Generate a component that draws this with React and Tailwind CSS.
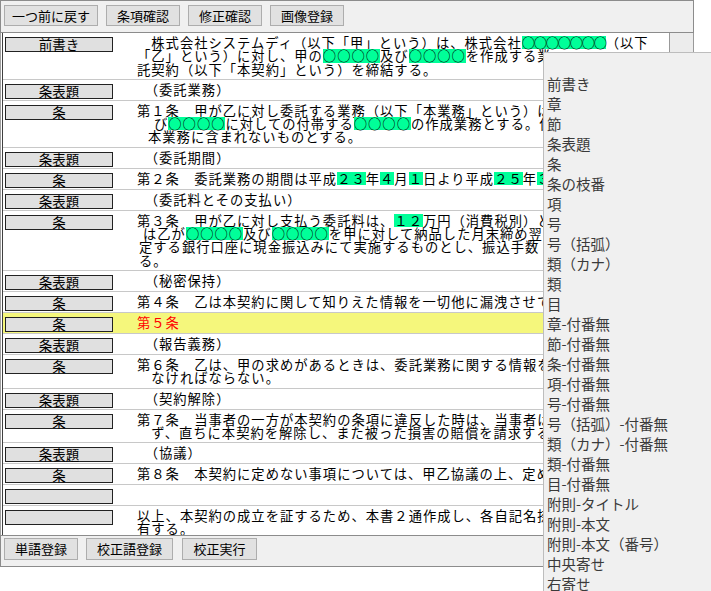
import React from "react";

const Hl = ({ children, tight }) => (
  <span
    className={
      tight
        ? "inline-block bg-[#00ff99] tracking-[-1.3px]"
        : "inline-block bg-[#00ff99]"
    }
  >
    {children}
  </span>
);

const Row = ({ label, yellow, children }) => (
  <div
    className={
      yellow
        ? "flex min-h-[21px] border-b border-[#c8c8c8] bg-[#f5f77c]"
        : "flex min-h-[21px] border-b border-[#c8c8c8]"
    }
  >
    <div className="shrink-0 pl-[2px] pt-[4px]">
      <div className="w-[108px] h-[15px] border border-[#222] bg-[#e0e0e0] text-center text-[13.5px] leading-[13px] text-black">
        {label}
      </div>
    </div>
    <div className="ml-[24px] pt-[3px] pb-[3px] text-[13.3px] tracking-[1px] leading-[13.3px] text-black whitespace-nowrap">
      {children}
    </div>
  </div>
);

const Btn = ({ children, w, h }) => (
  <div
    className={
      "flex items-center justify-center border border-[#adadad] bg-[#e1e1e1] text-[13px] text-black " +
      w +
      " " +
      h
    }
  >
    {children}
  </div>
);

const menuItems = [
  "",
  "前書き",
  "章",
  "節",
  "条表題",
  "条",
  "条の枝番",
  "項",
  "号",
  "号（括弧）",
  "類（カナ）",
  "類",
  "目",
  "章-付番無",
  "節-付番無",
  "条-付番無",
  "項-付番無",
  "号-付番無",
  "号（括弧）-付番無",
  "類（カナ）-付番無",
  "類-付番無",
  "目-付番無",
  "附則-タイトル",
  "附則-本文",
  "附則-本文（番号）",
  "中央寄せ",
  "右寄せ",
];

export default function App() {
  return (
    <div className="relative w-[711px] h-[591px] overflow-hidden bg-white font-['Noto_Sans_CJK_JP',sans-serif]">
      <div className="w-[694px] flex flex-col">
        {/* top toolbar */}
        <div className="h-[33px] border border-[#8c8c8c] bg-[#f0f0f0] flex items-start gap-[8px] pl-[3px] pt-[4px]">
          <Btn w="w-[94px]" h="h-[21px]">一つ前に戻す</Btn>
          <Btn w="w-[74px]" h="h-[21px]">条項確認</Btn>
          <Btn w="w-[74px]" h="h-[21px]">修正確認</Btn>
          <Btn w="w-[74px]" h="h-[21px]">画像登録</Btn>
        </div>

        {/* table + scrollbar */}
        <div className="h-[502px] flex border-l border-[#a0a0a0] pl-[1px]">
          <div className="flex-1 min-w-0 border-l border-[#404040] overflow-hidden">
            <Row label="前書き">
              <div>
                {"　株式会社システムディ（以下「甲」という）は、株式会社"}
                <Hl tight>○○○○○○○</Hl>（以下
              </div>
              <div>
                「乙」という）に対し、甲の<Hl>○○○○</Hl>及び<Hl>○○○○</Hl>
                を作成する業
              </div>
              <div>託契約（以下「本契約」という）を締結する。</div>
            </Row>
            <Row label="条表題">
              <div>{"　（委託業務）"}</div>
            </Row>
            <Row label="条">
              <div>第１条　甲が乙に対し委託する業務（以下「本業務」という）は</div>
              <div className="pl-[17px]">
                び<Hl>○○○○</Hl>に対しての付帯する<Hl>○○○○</Hl>の作成業務とする。但
              </div>
              <div className="pl-[11px]">本業務に含まれないものとする。</div>
            </Row>
            <Row label="条表題">
              <div>{"　（委託期間）"}</div>
            </Row>
            <Row label="条">
              <div>
                第２条　委託業務の期間は平成<Hl>２３</Hl>年<Hl>４</Hl>月<Hl>１</Hl>
                日より平成<Hl>２５</Hl>年<Hl>３</Hl>
              </div>
            </Row>
            <Row label="条表題">
              <div>{"　（委託料とその支払い）"}</div>
            </Row>
            <Row label="条">
              <div>
                第３条　甲が乙に対し支払う委託料は、<Hl>１２</Hl>万円（消費税別）と
              </div>
              <div className="pl-[6px]">
                は乙が<Hl>○○○○</Hl>及び<Hl>○○○○</Hl>を甲に対して納品した月末締め翌
              </div>
              <div className="pl-[2px]">定する銀行口座に現金振込みにて実施するものとし、振込手数</div>
              <div className="pl-[2px]">る。</div>
            </Row>
            <Row label="条表題">
              <div>{"　（秘密保持）"}</div>
            </Row>
            <Row label="条">
              <div>第４条　乙は本契約に関して知りえた情報を一切他に漏洩させて</div>
            </Row>
            <Row label="条" yellow>
              <div className="text-[#ff0000]">第５条</div>
            </Row>
            <Row label="条表題">
              <div>{"　（報告義務）"}</div>
            </Row>
            <Row label="条">
              <div>第６条　乙は、甲の求めがあるときは、委託業務に関する情報を</div>
              <div>{"　なければならない。"}</div>
            </Row>
            <Row label="条表題">
              <div>{"　（契約解除）"}</div>
            </Row>
            <Row label="条">
              <div>第７条　当事者の一方が本契約の条項に違反した時は、当事者は</div>
              <div>{"　ず、直ちに本契約を解除し、また被った損害の賠償を請求する"}</div>
            </Row>
            <Row label="条表題">
              <div>{"　（協議）"}</div>
            </Row>
            <Row label="条">
              <div>第８条　本契約に定めない事項については、甲乙協議の上、定め</div>
            </Row>
            <Row label="">
              <div></div>
            </Row>
            <Row label="">
              <div>以上、本契約の成立を証するため、本書２通作成し、各自記名捺</div>
              <div>有する。</div>
            </Row>
          </div>
          <div className="w-[25px] shrink-0 border-l border-r border-[#999] bg-[#ececec]" />
        </div>

        {/* bottom toolbar */}
        <div className="h-[32px] border border-[#8c8c8c] bg-[#f0f0f0] flex items-start pl-[3px] pt-[2px]">
          <Btn w="w-[74px]" h="h-[22px]">単語登録</Btn>
          <div className="w-[8px]" />
          <Btn w="w-[87px]" h="h-[22px]">校正語登録</Btn>
          <div className="w-[9px]" />
          <Btn w="w-[75px]" h="h-[22px]">校正実行</Btn>
        </div>
      </div>

      {/* context menu */}
      <div className="absolute left-[543px] top-[52px] w-[190px] h-[560px] border border-[#bdbdbd] bg-[#f0f0f0] pt-[1px]">
        {menuItems.map((m, i) => (
          <div
            key={i}
            className="h-[20px] pl-[3px] text-[14.5px] leading-[20px] text-[#3a3a3a] whitespace-nowrap"
          >
            {m}
          </div>
        ))}
      </div>
    </div>
  );
}
